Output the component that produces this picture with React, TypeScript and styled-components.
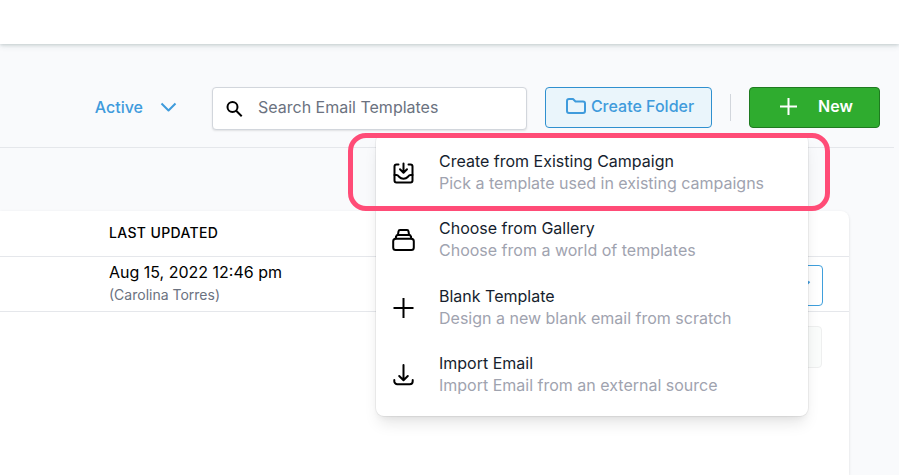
import React from "react";
import styled, { createGlobalStyle } from "styled-components";

const GlobalStyle = createGlobalStyle`
  *, *::before, *::after { box-sizing: border-box; }
  html, body, #root { height: 100%; }
  body {
    margin: 0;
    overflow: hidden;
    background: #f9fafc;
    color: #161e2e;
    font-family: Inter, "Liberation Sans", sans-serif;
    font-size: 16px;
    line-height: 22px;
  }
  button, input { font: inherit; }
`;

const Page = styled.div`
  min-height: 100%;
  display: flex;
  flex-direction: column;
`;

const TopBar = styled.header`
  height: 44px;
  flex: none;
  background: #fff;
  box-shadow: 0 1px 3px rgba(40, 70, 70, 0.16), 0 2px 6px rgba(40, 80, 80, 0.12);
`;

const Toolbar = styled.div`
  display: flex;
  align-items: flex-start;
  justify-content: flex-end;
  margin-right: 5px;
  padding: 43px 14px 17px;
  border-bottom: 1px solid #e5e7eb;
`;

const StatusButton = styled.button`
  display: flex;
  align-items: center;
  gap: 17px;
  height: 39px;
  margin-right: 35px;
  padding: 0;
  border: 0;
  background: none;
  color: #3f9bdc;
  font-weight: 500;
`;

const SearchBox = styled.label`
  display: flex;
  align-items: center;
  gap: 15px;
  width: 315px;
  height: 43px;
  margin-right: 18px;
  padding: 0 13px;
  border: 1px solid #d2d6dc;
  border-radius: 4px;
  background: #fff;
  box-shadow: 0 1px 2px rgba(0, 0, 0, 0.1);
`;

const SearchInput = styled.input`
  flex: 1;
  min-width: 0;
  height: 38px;
  padding: 0 0 4px;
  border: 0;
  outline: 0;
  background: transparent;
  &::placeholder { color: #6b7280; opacity: 1; }
`;

const ActionButton = styled.button<{ $primary?: boolean }>`
  display: flex;
  align-items: center;
  justify-content: center;
  gap: ${(p) => (p.$primary ? 20 : 5)}px;
  width: ${(p) => (p.$primary ? 131 : 167)}px;
  height: 41px;
  padding: 0 0 3px 3px;
  border: 1px solid ${(p) => (p.$primary ? "#1f7a20" : "#3090cf")};
  border-radius: 4px;
  background: ${(p) => (p.$primary ? "#2fac2f" : "#eaf5fb")};
  color: ${(p) => (p.$primary ? "#fff" : "#3f9bdc")};
  font-weight: ${(p) => (p.$primary ? 600 : 500)};
`;

const Divider = styled.span`
  width: 1px;
  height: 27px;
  margin: 7px 18px 0;
  background: #d2d6dc;
`;

const MenuAnchor = styled.div`
  position: relative;
`;

const Menu = styled.div`
  position: absolute;
  z-index: 2;
  top: 47px;
  right: 72px;
  width: 432px;
  min-height: 282px;
  display: grid;
  grid-auto-rows: 1fr;
  padding: 4px 0 8px;
  border-radius: 8px;
  background: #fff;
  box-shadow: 0 0 0 1px rgba(0, 0, 0, 0.05), 0 10px 15px -3px rgba(0, 0, 0, 0.1),
    0 4px 6px -2px rgba(0, 0, 0, 0.05);
`;

const MenuItem = styled.button`
  display: flex;
  align-items: center;
  gap: 23px;
  padding: 0 16px;
  border: 0;
  background: none;
  color: #000;
  text-align: left;
`;

const MenuText = styled.span`
  display: flex;
  flex-direction: column;
  color: #161e2e;
`;

const Hint = styled.span`
  color: #9fa3af;
`;

const Highlight = styled.div`
  position: absolute;
  z-index: 3;
  top: 46px;
  right: 50px;
  width: 482px;
  height: 78px;
  border: 5px solid #ff4c77;
  border-radius: 18px;
  pointer-events: none;
`;

const Card = styled.main`
  flex: 1;
  margin: 63px 50px 0 0;
  border-top-right-radius: 8px;
  background: #fff;
  box-shadow: 0 1px 3px rgba(0, 0, 0, 0.12);
`;

const Table = styled.table`
  width: 100%;
  border-collapse: collapse;
  table-layout: fixed;
`;

const Cell = styled.td<{ $width?: number; $end?: boolean }>`
  width: ${(p) => (p.$width ? `${p.$width}px` : "auto")};
  height: 55px;
  padding: ${(p) => (p.$end ? "8px 26px 4px 0" : "4px 0 5px")};
  border-bottom: 1px solid #e5e7eb;
  text-align: ${(p) => (p.$end ? "right" : "left")};
  color: #000;
`;

const HeadCell = styled(Cell)`
  height: 45px;
  padding: 0;
  font-size: 14px;
  font-weight: 500;
  letter-spacing: 0.025em;
  text-transform: uppercase;
`;

const Author = styled.div`
  margin-top: 1px;
  color: #6b7280;
  font-size: 14px;
`;

const RowButton = styled.button`
  display: inline-flex;
  align-items: center;
  justify-content: flex-end;
  width: 100px;
  height: 41px;
  padding: 0 11px 2px;
  border: 1px solid #3f9fdc;
  border-radius: 4px;
  background: #fff;
  color: #3f9bdc;
  vertical-align: middle;
`;

const Pager = styled.div`
  display: flex;
  justify-content: flex-end;
  padding: 14px 27px 0 0;
`;

const PagerButton = styled.button`
  width: 80px;
  height: 42px;
  border: 1px solid #eeefef;
  border-radius: 4px;
  background: #fafcfb;
`;

const Svg = ({ w, h = w, stroke = 2, children }: {
  w: number; h?: number; stroke?: number; children: React.ReactNode;
}) => (
  <svg width={w} height={h} viewBox={`0 0 ${w} ${h}`} fill="none" stroke="currentColor"
    strokeWidth={stroke} strokeLinecap="round" strokeLinejoin="round" aria-hidden="true">
    {children}
  </svg>
);

const Chevron = () => (
  <Svg w={17} h={10}><path d="M1.5 1.5l7 7 7-7" strokeLinecap="butt" /></Svg>
);

const CampaignIcon = () => (
  <Svg w={24}>
    <path d="M6.5 4.5h-2a2 2 0 0 0-2 2v14a2 2 0 0 0 2 2h14a2 2 0 0 0 2-2v-14a2 2 0 0 0-2-2h-2" />
    <path d="M11.5 3.500v9M8 9.300l3.500 3.500L15 9.300" />
    <path d="M2.500 15h1.800c1.700 0 2.200 1 3 2 2 2.300 6.400 2.300 8.400 0 .8-1 1.300-2 3-2h1.800" />
  </Svg>
);

const GalleryIcon = () => (
  <Svg w={24}>
    <rect x="1.200" y="11.700" width="20.600" height="11.300" rx="2.500" />
    <path d="M3.700 11.500l.5-2.200A1.500 1.500 0 0 1 5.700 8h11.600a1.500 1.500 0 0 1 1.500 1.300l.5 2.200" />
    <path d="M6 7.500l.5-3.200A1.500 1.500 0 0 1 8 3h7a1.500 1.500 0 0 1 1.500 1.300L17 7.500" />
  </Svg>
);

const PlusIcon = () => (
  <Svg w={24}><path d="M11.5 3v20M1.5 13h20" strokeLinecap="butt" /></Svg>
);

const ImportIcon = () => (
  <Svg w={24}>
    <path d="M11.5 3v15M7.200 14l4.300 4.300 4.300-4.300" />
    <path d="M2.300 18v1.200a3 3 0 0 0 3 3h12.400a3 3 0 0 0 3-3V18" />
  </Svg>
);

const items = [
  { title: "Create from Existing Campaign", hint: "Pick a template used in existing campaigns", Icon: CampaignIcon },
  { title: "Choose from Gallery", hint: "Choose from a world of templates", Icon: GalleryIcon },
  { title: "Blank Template", hint: "Design a new blank email from scratch", Icon: PlusIcon },
  { title: "Import Email", hint: "Import Email from an external source", Icon: ImportIcon },
];

export default function App() {
  return (
    <Page>
      <GlobalStyle />
      <TopBar />
      <Toolbar>
        <StatusButton>Active<Chevron /></StatusButton>
        <SearchBox>
          <Svg w={17}>
            <circle cx="6.500" cy="7" r="5" stroke="#000" />
            <path d="M10.200 10.700l5.500 5.500" stroke="#000" strokeLinecap="butt" />
          </Svg>
          <SearchInput type="search" placeholder="Search Email Templates" aria-label="Search Email Templates" />
        </SearchBox>
        <ActionButton>
          <Svg w={20} h={16}>
            <path d="M1 3a2 2 0 0 1 2-2h4l2.500 2.500H17a2 2 0 0 1 2 2V13a2 2 0 0 1-2 2H3a2 2 0 0 1-2-2z" />
          </Svg>
          Create Folder
        </ActionButton>
        <Divider />
        <MenuAnchor>
          <ActionButton $primary aria-haspopup="menu" aria-expanded="true">
            <Svg w={19}><path d="M9.500 1v17M1 9.500h17" strokeLinecap="butt" /></Svg>
            New
          </ActionButton>
          <Menu role="menu">
            {items.map(({ title, hint, Icon }) => (
              <MenuItem key={title} role="menuitem">
                <Icon />
                <MenuText>
                  <span>{title}</span>
                  <Hint>{hint}</Hint>
                </MenuText>
              </MenuItem>
            ))}
          </Menu>
          <Highlight />
        </MenuAnchor>
      </Toolbar>
      <Card>
        <Table>
          <thead>
            <tr>
              <HeadCell $width={109} />
              <HeadCell as="th" scope="col">Last Updated</HeadCell>
              <HeadCell $width={180} />
            </tr>
          </thead>
          <tbody>
            <tr>
              <Cell />
              <Cell>Aug 15, 2022 12:46 pm<Author>(Carolina Torres)</Author></Cell>
              <Cell $end><RowButton aria-label="Template actions"><Chevron /></RowButton></Cell>
            </tr>
          </tbody>
        </Table>
        <Pager><PagerButton aria-label="Next page" disabled /></Pager>
      </Card>
    </Page>
  );
}
